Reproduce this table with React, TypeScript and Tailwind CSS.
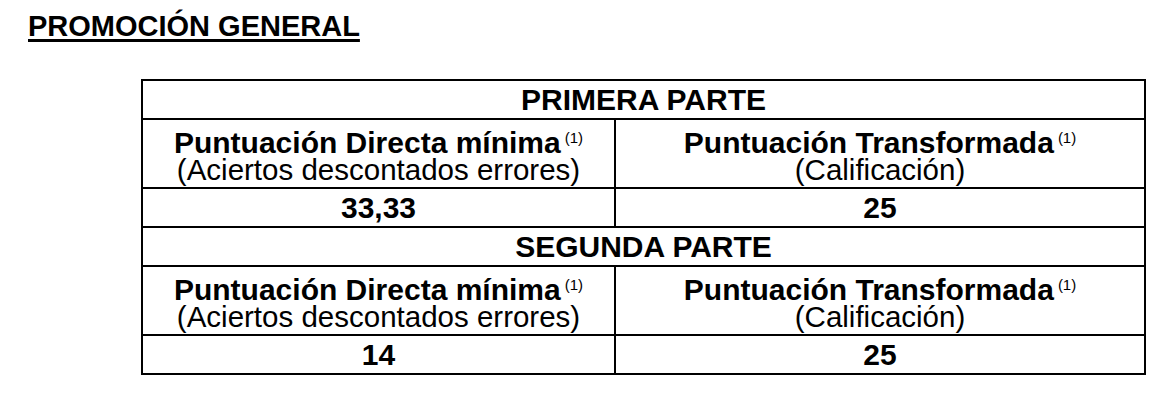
import React from 'react';

interface Part {
    title: string;
    direct: string;
    transformed: string;
}

const parts: Part[] = [
    { title: 'PRIMERA PARTE', direct: '33,33', transformed: '25' },
    { title: 'SEGUNDA PARTE', direct: '14', transformed: '25' },
];

function Note() {
    return <span className="relative -top-[10px] ml-[4px] text-[15px] font-normal leading-none">(1)</span>;
}

export default function App() {
    return (
        <div className="min-h-screen bg-white text-black font-['Liberation_Sans',Arial,sans-serif]">
            <div className="pt-[10px] pl-[28px]">
                <h1 className="text-[29px] font-bold leading-[32px] underline decoration-[3px] underline-offset-[3px]">
                    PROMOCIÓN GENERAL
                </h1>
            </div>
            <table className="ml-[141px] mt-[37px] w-[1003px] table-fixed border-collapse border-2 border-black text-[29.5px] leading-[27px]">
                <colgroup>
                    <col className="w-[473px]" />
                    <col className="w-[530px]" />
                </colgroup>
                <tbody>
                    {parts.map((p) => (
                        <React.Fragment key={p.title}>
                            <tr className="h-[38.5px]">
                                <td colSpan={2} className="border-2 border-black text-center font-bold text-[30px]">
                                    {p.title}
                                </td>
                            </tr>
                            <tr className="h-[69.5px]">
                                <td className="border-2 border-black text-center pt-[6px]">
                                    <div className="font-bold text-[30px]">Puntuación Directa mínima<Note /></div>
                                    <div>(Aciertos descontados errores)</div>
                                </td>
                                <td className="border-2 border-black text-center pt-[6px]">
                                    <div className="font-bold text-[30px]">Puntuación Transformada<Note /></div>
                                    <div>(Calificación)</div>
                                </td>
                            </tr>
                            <tr className="h-[39px]">
                                <td className="border-2 border-black text-center font-bold text-[30px]">{p.direct}</td>
                                <td className="border-2 border-black text-center font-bold text-[30px]">{p.transformed}</td>
                            </tr>
                        </React.Fragment>
                    ))}
                </tbody>
            </table>
        </div>
    );
}
